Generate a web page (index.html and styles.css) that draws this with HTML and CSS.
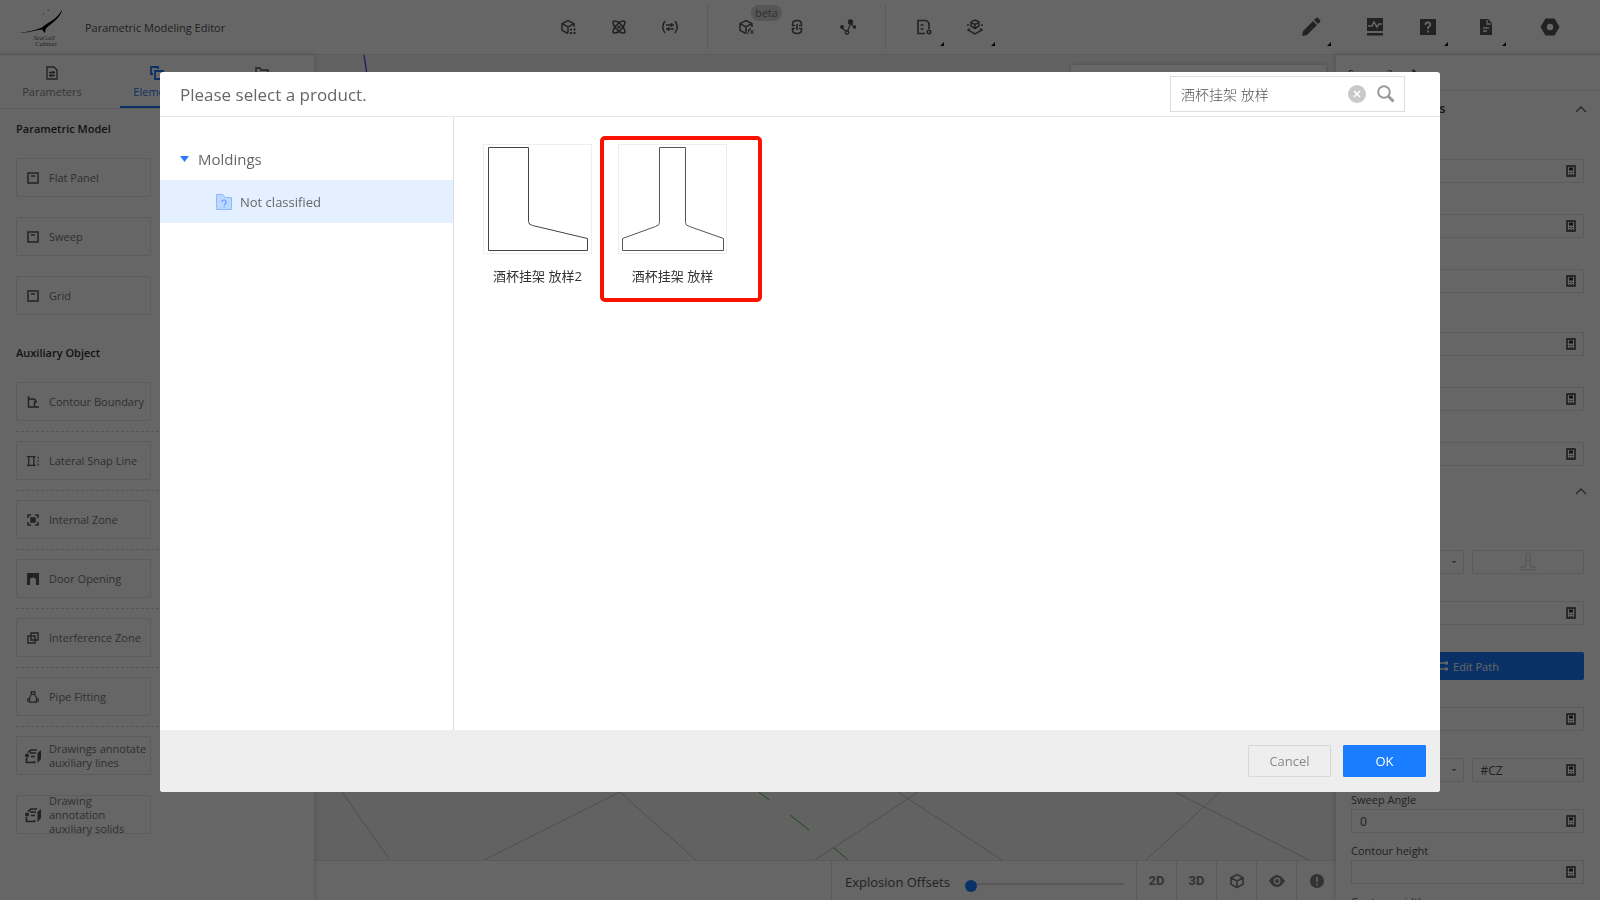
FILE: index.html
```html
<!DOCTYPE html>
<html lang="en">
<head>
<meta charset="utf-8">
<title>Parametric Modeling Editor</title>
<link rel="stylesheet" href="styles.css">
</head>
<body>
<svg class="defs" aria-hidden="true">
  <symbol id="panel" viewBox="0 0 12 12"><path d="M1 1h10v10H1z" fill="none" stroke="currentColor" stroke-width="1.5"/><path d="M4 4h4" stroke="currentColor" stroke-width="1.5"/></symbol>
  <symbol id="solid" viewBox="0 0 16 16"><path d="M3 4.500L6 2h6M5 5h6M1.500 10v4.500h8V13M6 8.500h4" fill="none" stroke="currentColor" stroke-width="1.700"/><path d="M12.500 5L16 2v9l-3.500 4z" fill="currentColor"/><circle cx="2" cy="7.500" r="2" fill="currentColor"/></symbol>
  <symbol id="calc" viewBox="0 0 10 12"><path d="M1 1h8v10H1z" fill="none" stroke="currentColor" stroke-width="1.4"/><path d="M3 2.500h4v3H3z" fill="currentColor"/><path d="M3 7.500h4M3 9.500h4" stroke="currentColor" stroke-width=".8" stroke-dasharray="1.500 1"/></symbol>
  <symbol id="up" viewBox="0 0 12 8"><path d="M1 7l5-5 5 5" fill="none" stroke="currentColor" stroke-width="1.4"/></symbol>
  <symbol id="cube" viewBox="0 0 16 16"><path d="M8 1.500l6 3.200v6.600l-6 3.200-6-3.200V4.700zM2 4.700L8 8l6-3.300M8 8v6.500" fill="none" stroke="currentColor" stroke-width="1.7"/></symbol>
</svg>
<div class="app">
  <header class="topbar">
    <svg class="logo" viewBox="0 0 48 38" aria-label="SeaGull Cabinet"><path d="M0 24c8 0 15-2 23-5 6-6 16-8 21-19-1 8-9 13-17 20l-1 5-3-4C15 22 8 25 0 24z" fill="#000"/><path d="M24 5h1M29 1h1" stroke="#555"/><text x="14" y="32" class="logo-text">SeaGull</text><text x="16" y="38" class="logo-text">Cabinet</text></svg>
    <h1 class="app-title">Parametric Modeling Editor</h1>
    <nav class="tools" aria-label="Tools">
      <div class="tool-group">
        <button class="tool" aria-label="Model grid"><svg viewBox="0 0 16 16"><path d="M8 14.500l-6-3.200V4.700l6-3.200 6 3.200V8M2 4.700L8 8l6-3.300M8 8v6" fill="none" stroke="currentColor" stroke-width="1.500"/><path d="M10 9.500h2v2h-2zM13.500 9.500h2v2h-2zM10 13h2v2h-2zM13.500 13h2v2h-2z" fill="currentColor"/></svg></button>
        <button class="tool" aria-label="Relations"><svg viewBox="0 0 16 16" fill="none" stroke="currentColor" stroke-width="1.600"><path d="M8 3.500C5 1.500 2 1.500 2 3.500c0 1 1 3 2 4.500-1 1.500-2 3.500-2 4.500 0 2 3 2 6 0 3 2 6 2 6 0 0-1-1-3-2-4.500 1-1.500 2-3.500 2-4.500 0-2-3-2-6 0zM8 3.500L4 8l4 4.500L12 8z"/><circle cx="8" cy="8" r=".8"/></svg></button>
        <button class="tool" aria-label="Variables"><svg viewBox="0 0 16 16" fill="none" stroke="currentColor" stroke-width="1.500"><path d="M3 2C0 6 0 10 3 14M13 2c3 4 3 8 0 12M4 6h8M4 10h8M9.500 4v4M6.500 8v4"/></svg></button>
      </div>
      <div class="tool-group">
        <button class="tool" aria-label="Formula"><svg viewBox="0 0 16 16" fill="none" stroke="currentColor" stroke-width="1.500"><path d="M8 14.500l-6-3.200V4.700l6-3.200 6 3.200V8M2 4.700L8 8l6-3.300M8 8v6"/><path d="M9 15c2 0 1-6 4-6M10 11h3M12.500 11l3 4M15.500 11l-3 4" stroke-width="1"/></svg><span class="beta">beta</span></button>
        <button class="tool" aria-label="Link"><svg viewBox="0 0 16 16" fill="none" stroke="currentColor" stroke-width="1.600"><path d="M6 6.500H3.500V5q0-3.500 4.500-3.500T12.500 5v1.500H10M6 9.500H3.500V11q0 3.500 4.500 3.500t4.500-3.500V9.500H10M8 5v6"/></svg></button>
        <button class="tool" aria-label="Nodes"><svg viewBox="0 0 16 16"><path d="M2 9l5 4 4-9 3 5" fill="none" stroke="currentColor" stroke-width="1.200"/><g fill="currentColor"><circle cx="2" cy="8" r="2"/><circle cx="10.500" cy="3" r="2.700"/><circle cx="14.500" cy="8" r="1.700"/></g><circle cx="7" cy="13.500" r="1.700" fill="#fff" stroke="currentColor" stroke-width="1.400"/></svg></button>
      </div>
      <div class="tool-group">
        <button class="tool more" aria-label="Document settings"><svg viewBox="0 0 16 16" fill="none" stroke="currentColor" stroke-width="1.600"><path d="M9 14.500H2v-13h8.500L13 4v6M4.500 6h3M4.500 10h3"/><circle cx="13" cy="13" r="1.700"/></svg></button>
        <button class="tool more" aria-label="Layers"><svg viewBox="0 0 16 16" fill="none" stroke="currentColor" stroke-width="1.500"><path d="M8 1l4 2v4L8 9.500 4 7V3zM4 3.500L8 5.500l4-2M8 5.500v4M3 9.500l-2 1.500 7 4 7-4-2-1.500M0 6h2M14 6h2"/></svg></button>
      </div>
    </nav>
    <nav class="actions" aria-label="Actions">
      <button class="action more" aria-label="Edit"><svg viewBox="0 0 20 20" fill="currentColor"><path d="M1 19l1-5L12 4l4 4L6 18zM13 3l2-2q1-1 2 0l2 2q1 1 0 2l-2 2z"/></svg></button>
      <button class="action" aria-label="Monitor"><svg viewBox="0 0 20 20"><path d="M2 1h16v13H2zM2 16h16v2.500H2z" fill="currentColor"/><path d="M3 9h4l2-4 3 5 2-3h3" fill="none" stroke="#fff" stroke-width="1.500"/></svg></button>
      <button class="action more" aria-label="Help"><svg viewBox="0 0 20 20"><path d="M2 2h16v16H2z" fill="currentColor"/><path d="M7.500 8V6.500Q10 4 12 6.500q1 2-2 4V12M10 13.500v2" fill="none" stroke="#fff" stroke-width="1.800"/></svg></button>
      <button class="action more" aria-label="Documents"><svg viewBox="0 0 20 20"><path d="M4 2h8l4 4v12H4z" fill="currentColor"/><path d="M11 3v4h4M7 11h6M7 14h4" fill="none" stroke="#fff" stroke-width="1.300"/></svg></button>
      <button class="action" aria-label="Settings"><svg viewBox="0 0 20 20"><path d="M5.500 1.500h9L19.500 10l-5 8.500h-9L.5 10z" fill="currentColor"/><circle cx="10" cy="10" r="3.200" fill="#fff"/></svg></button>
    </nav>
  </header>
  <div class="workspace">
    <aside class="left">
      <div class="tabs">
        <button class="tab"><svg viewBox="0 0 14 14" fill="none" stroke="currentColor" stroke-width="1.400"><path d="M2 1h7l3 3v9H2zM4 6.500h6M4 9.500h6M8 5v3M6 8v3"/></svg>Parameters</button>
        <button class="tab active"><svg viewBox="0 0 14 14" fill="none" stroke="currentColor" stroke-width="1.800"><path d="M3 8H1V1h7v2M5 5h8v8H5z"/></svg>Elements</button>
        <button class="tab" aria-label="Files"><svg viewBox="0 0 14 14" fill="none" stroke="currentColor" stroke-width="1.400"><path d="M1 13V2h4l1 2h7v9z"/></svg></button>
      </div>
      <section class="catalog">
        <h2>Parametric Model</h2>
        <div class="models">
          <button class="card"><svg><use href="#panel"/></svg><span>Flat Panel</span></button>
          <button class="card"><svg><use href="#panel"/></svg><span>Sweep</span></button>
          <button class="card"><svg><use href="#panel"/></svg><span>Grid</span></button>
        </div>
        <h2>Auxiliary Object</h2>
        <ul class="objects">
          <li><button class="card"><svg viewBox="0 0 12 12" fill="none" stroke="currentColor" stroke-width="1.500"><path d="M1.500 0v11H12M1 3h5q3 0 3 3H7.500v5"/></svg><span>Contour Boundary</span></button></li>
          <li><button class="card"><svg viewBox="0 0 14 12" fill="none" stroke="currentColor" stroke-width="1.500"><path d="M2 0v12M8 0v12M0 1h10M0 11h10"/><path d="M13 1v11" stroke-dasharray="2 2"/></svg><span>Lateral Snap Line</span></button></li>
          <li><button class="card"><svg viewBox="0 0 12 12" fill="none" stroke="currentColor" stroke-width="1.500"><path d="M1 4V1h3M8 1h3v3M11 8v3H8M4 11H1V8"/><path d="M4 4h4v4H4z" fill="currentColor"/></svg><span>Internal Zone</span></button></li>
          <li><button class="card"><svg viewBox="0 0 12 12"><path d="M0 0h12v12H9V6q-3-3-6 0v6H0z" fill="currentColor"/></svg><span>Door Opening</span></button></li>
          <li><button class="card"><svg viewBox="0 0 12 12" fill="none" stroke="currentColor" stroke-width="1.400"><path d="M4 1h7v7H4zM1 4h7v7H1z"/></svg><span>Interference Zone</span></button></li>
          <li><button class="card"><svg viewBox="0 0 14 14" fill="none" stroke="currentColor" stroke-width="1.300"><path d="M4 1h6M5 1v3L3 8v5h8V8L9 4V1M5 4h4M3 9H1v3h2M11 9h2v3h-2"/></svg><span>Pipe Fitting</span></button></li>
          <li class="plain"><button class="card"><svg class="large"><use href="#solid"/></svg><span>Drawings annotate auxiliary lines</span></button></li>
          <li class="plain"><button class="card"><svg class="large"><use href="#solid"/></svg><span>Drawing annotation auxiliary solids</span></button></li>
        </ul>
      </section>
    </aside>
    <main class="stage">
      <div class="canvas">
        <svg class="scene" viewBox="0 0 1022 805" preserveAspectRatio="xMidYMax slice" fill="none">
          <path d="M50 0l3 20" stroke="#6a50ff" stroke-width="1.500"/>
          <path d="M28 737l48 68M170 805l136-68 76 68M501 805l103-68M584 737l104 68M832 805l74-68M861 737l134 68" stroke="#c4c4c4"/>
          <path d="M445 737l10 8M476 760l19 15M520 793l14 12" stroke="#44b03c"/>
        </svg>
        <div class="float-panel"></div>
      </div>
      <footer class="viewbar">
        <label class="offsets">Explosion Offsets<input type="range" min="0" max="100" value="0"></label>
        <button class="view">2D</button>
        <button class="view">3D</button>
        <button class="view" aria-label="Perspective"><svg><use href="#cube"/></svg></button>
        <button class="view" aria-label="Visibility"><svg viewBox="0 0 16 16"><path d="M0 8q8-12 16 0-8 12-16 0z" fill="currentColor"/><circle cx="8" cy="8" r="2.700" fill="currentColor" stroke="#fff" stroke-width="1.500"/></svg></button>
        <button class="view" aria-label="Warnings"><svg viewBox="0 0 16 16"><circle cx="8" cy="8" r="7" fill="currentColor"/><path d="M8 4v5M8 10.500v2" stroke="#fff" stroke-width="1.500"/></svg></button>
      </footer>
    </main>
    <aside class="right">
      <div class="object-name">Sweep_2<svg viewBox="0 0 12 12" fill="currentColor"><path d="M0 12l1-4 5-5 3 3-5 5zM7 2l2-2 3 3-2 2z"/></svg></div>
      <div class="section-head"><h2>Basic Properties</h2><svg><use href="#up"/></svg></div>
      <div class="basic">
        <div class="field"><input aria-label="Name"><svg><use href="#calc"/></svg></div>
        <div class="field"><input aria-label="Code"><svg><use href="#calc"/></svg></div>
        <div class="field"><input aria-label="Visible"><svg><use href="#calc"/></svg></div>
        <div class="field split"><input aria-label="X"><svg><use href="#calc"/></svg></div>
        <div class="field"><input aria-label="Y"><svg><use href="#calc"/></svg></div>
        <div class="field"><input aria-label="Z"><svg><use href="#calc"/></svg></div>
      </div>
      <div class="section-head second"><svg><use href="#up"/></svg></div>
      <div class="shape">
        <div class="pair">
          <select aria-label="Contour type"><option></option></select>
          <button class="contour" aria-label="Contour"><svg viewBox="0 0 18 18" fill="none" stroke="currentColor"><path d="M7 1h4v12l6 2v2H1v-2l6-2z"/></svg></button>
        </div>
        <div class="field"><input aria-label="Offset"><svg><use href="#calc"/></svg></div>
        <button class="edit-path"><svg viewBox="0 0 12 12" fill="none" stroke="currentColor" stroke-width="1.500"><path d="M3 3h6M3 9h6"/><path d="M1 3h2M9 3h3M1 9h2M9 9h3" stroke-width="3"/></svg>Edit Path</button>
        <div class="field"><input aria-label="Path"><svg><use href="#calc"/></svg></div>
        <div class="pair">
          <select aria-label="Material type"><option></option></select>
          <div class="field"><input aria-label="Material" value="#CZ"><svg><use href="#calc"/></svg></div>
        </div>
      </div>
      <div class="labelled"><label for="angle">Sweep Angle</label><div class="field"><input id="angle" value="0"><svg><use href="#calc"/></svg></div></div>
      <div class="labelled"><label for="height">Contour height</label><div class="field"><input id="height"><svg><use href="#calc"/></svg></div></div>
      <div class="labelled"><label for="width">Contour width</label><div class="field"><input id="width"><svg><use href="#calc"/></svg></div></div>
    </aside>
  </div>
</div>
<div class="backdrop">
  <div class="dialog" role="dialog" aria-labelledby="dialog-title">
    <header class="dialog-head">
      <h2 id="dialog-title">Please select a product.</h2>
      <div class="search">
        <input type="text" aria-label="Search products" value="酒杯挂架 放样">
        <button class="clear" aria-label="Clear"><svg viewBox="0 0 18 18"><circle cx="9" cy="9" r="9" fill="#c9c9c9"/><path d="M6 6l6 6M12 6l-6 6" stroke="#fff" stroke-width="1.600"/></svg></button>
        <button class="find" aria-label="Search"><svg viewBox="0 0 18 18" fill="none" stroke="#999"><circle cx="7" cy="7" r="5.800" stroke-width="2"/><path d="M11.500 11.500l5 5" stroke-width="3"/></svg></button>
      </div>
    </header>
    <div class="dialog-body">
      <nav class="tree" aria-label="Categories">
        <button class="branch"><svg viewBox="0 0 9 6"><path d="M0 0h9L4.500 6z" fill="#2b7cff"/></svg>Moldings</button>
        <a class="leaf" href="#"><svg viewBox="0 0 16 16"><path d="M.5 15.500V.5H7l2 3h6.500v12z" fill="#bcd8ff" stroke="#8dbbff"/><path d="M6 8q0-2 2-2t2 2-2 3M8 12.500v1" fill="none" stroke="#5b9bff" stroke-width="1.200"/></svg>Not classified</a>
      </nav>
      <div class="products">
        <button class="product"><svg viewBox="0 0 107 108" fill="none" stroke="#444"><path d="M4.500 2.500h40v74q0 3 4 4l55 13v12h-99z"/></svg><span>酒杯挂架 放样2</span></button>
        <button class="product marked"><svg viewBox="0 0 107 108" fill="none" stroke="#555"><path d="M40.500 2.500h26v75q0 3 4 4l34 12v12h-101v-12l33-12q4-1 4-4z"/></svg><span>酒杯挂架 放样</span></button>
      </div>
    </div>
    <footer class="dialog-foot">
      <button class="btn">Cancel</button>
      <button class="btn primary">OK</button>
    </footer>
  </div>
</div>
</body>
</html>
```

FILE: styles.css
```css
* { box-sizing: border-box; }
body { margin: 0; font-family: "Open Sans", "Noto Sans CJK SC", sans-serif; font-size: 11px; color: #555; }
button, input, select { font: inherit; color: inherit; margin: 0; }
button { padding: 0; border: 0; background: none; }
h1, h2 { margin: 0; font-weight: 400; }
svg { display: block; flex: none; }
.defs { position: absolute; width: 0; height: 0; }

.app { display: flex; flex-direction: column; height: 100vh; overflow: hidden; background: #fff; }
.topbar { display: flex; align-items: center; height: 55px; flex: none; border-bottom: 1px solid #e6e6e6; padding-left: 20px; }
.logo { width: 46px; height: 37px; }
.logo-text { font: italic 7px "Liberation Serif", serif; fill: #555; }
.app-title { margin-left: 19px; padding-top: 1px; font-size: 11px; width: 445px; }
.tools { display: flex; height: 44px; }
.tool-group { display: flex; padding: 0 12px; border-right: 1px solid #e0e0e0; }
.tool-group:last-child { border: 0; }
.tool { position: relative; display: grid; place-items: center; width: 51px; color: #555; }
.tool svg { width: 16px; height: 16px; }
.beta { position: absolute; left: 31px; top: 0; padding: 0 4px; border-radius: 8px; background: #d6d6d6; font-size: 11px; line-height: 16px; color: #777; }
.more::after { content: ""; position: absolute; right: calc(50% - 20px); bottom: 3px; border: 2px solid #111; border-top-color: transparent; border-left-color: transparent; }
.actions { display: flex; margin-left: auto; padding-right: 19px; height: 44px; }
.action { position: relative; display: grid; place-items: center; width: 62px; color: #555; }
.action:nth-child(1) { width: 72px; }
.action:nth-child(2) { width: 56px; }
.action:nth-child(3) { width: 50px; }
.action:nth-child(4) { width: 66px; }
.action svg { width: 20px; height: 20px; }

.workspace { display: flex; flex: 1; min-height: 0; }
.left { position: relative; width: 314px; flex: none; box-shadow: 0 0 6px rgba(0, 0, 0, .2); z-index: 1; background: #fff; }
.tabs { display: flex; height: 54px; border-bottom: 1px solid #e6e6e6; }
.tab { flex: 1; display: flex; flex-direction: column; align-items: center; gap: 4px; padding-top: 11px; line-height: 16px; color: #888; }
.tab svg { width: 14px; height: 14px; color: #555; }
.tab.active { color: #1a7cff; margin: 0 16px; border-bottom: 2px solid #1a7cff; }
.tab.active svg { color: #1a7cff; }
.tab:not(.active) { flex: 0 0 104px; }
.catalog { padding: 11px 0 0 16px; }
.catalog h2, .section-head h2 { line-height: 18px; font-weight: 600; color: #333; }
.catalog h2 { font-size: 11px; }
.section-head h2 { font-size: 12px; }
.models { display: grid; gap: 20px; padding: 20px 0 29px; }
.objects { list-style: none; margin: 0; padding: 20px 0 0; display: grid; gap: 9px; }
.objects li { padding-bottom: 10px; border-bottom: 1px dashed #d4d4d4; }
.objects .plain { border-color: transparent; }
.card { display: flex; align-items: center; width: 135px; height: 39px; border: 1px solid #e6e6e6; border-radius: 2px; padding-left: 10px; line-height: 14px; text-align: left; color: #777; }
.card svg { width: 12px; height: 12px; margin: 0 10px 0 0; color: #555; }
.card .large { width: 16px; height: 16px; margin: 0 8px 0 -2px; }

.stage { flex: 1; min-width: 0; display: flex; flex-direction: column; }
.canvas { position: relative; flex: 1; min-height: 0; background: #f4f4f4; overflow: hidden; }
.scene { width: 100%; height: 100%; }
.float-panel { position: absolute; top: 10px; right: 10px; width: 255px; height: 300px; background: #fff; box-shadow: 0 0 4px rgba(0, 0, 0, .25); }
.viewbar { display: flex; justify-content: flex-end; height: 40px; border-top: 1px solid #e4e4e4; background: #fff; }
.offsets { display: flex; align-items: center; gap: 15px; width: 305px; padding: 2px 12px 0 13px; border-left: 1px solid #e4e4e4; font-size: 13px; white-space: nowrap; }
.offsets input { appearance: none; flex: 1; min-width: 0; height: 12px; margin-top: 4px; background: linear-gradient(#ddd, #ddd) center / 100% 2px no-repeat; }
.offsets input::-webkit-slider-thumb { appearance: none; width: 12px; height: 12px; margin-top: 4px; border-radius: 50%; background: #1a7cff; }
.view { display: grid; place-items: center; width: 40px; border-left: 1px solid #e4e4e4; font: 700 13px Roboto, sans-serif; color: #808080; }
.view svg { width: 16px; height: 16px; }

.right { position: relative; z-index: 1; width: 264px; flex: none; overflow: hidden; background: #fff; box-shadow: 0 0 6px rgba(0, 0, 0, .2); }
.object-name { display: flex; gap: 13px; align-items: center; height: 36px; padding: 2px 0 0 12px; border-bottom: 1px solid #e6e6e6; }
.object-name svg { width: 10px; height: 10px; }
.section-head { display: flex; align-items: center; justify-content: space-between; height: 36px; padding: 0 13px 0 16px; }
.section-head svg { width: 12px; height: 8px; margin-left: auto; color: #666; }
.basic { display: grid; gap: 31px; padding: 32px 16px 0 15px; }
.split { margin-top: 8px; }
.field { display: flex; align-items: center; height: 24px; border: 1px solid #e4e4e4; padding: 0 7px 0 8px; }
.field input { flex: 1; min-width: 0; border: 0; padding: 0; background: none; font-size: 12px; }
.field svg { width: 10px; height: 12px; color: #333; }
.second { margin-top: 7px; }
.shape { display: grid; gap: 27px; padding: 41px 16px 0 15px; }
.pair { display: grid; grid-template-columns: repeat(2, minmax(0, 1fr)); gap: 8px; }
.pair select { height: 24px; appearance: none; border: 1px solid #e4e4e4; border-radius: 0; background: conic-gradient(from -45deg at 50% 100%, #888 90deg, transparent 0) right 6px center / 6px 3px no-repeat; }
.contour { display: grid; place-items: center; border: 1px solid #e4e4e4; color: #d0d0d0; }
.contour svg { width: 18px; height: 18px; }
.edit-path { display: flex; align-items: center; justify-content: center; gap: 5px; height: 28px; border-radius: 2px; background: #1a7cff; color: #fff; }
.edit-path svg { width: 12px; height: 12px; }
.labelled { padding: 8px 16px 0 15px; }
.labelled label { display: block; line-height: 19px; }

.backdrop { position: fixed; inset: 0; z-index: 10; padding: 72px 10vw 108px; background: rgba(0, 0, 0, .6); }
.dialog { display: flex; flex-direction: column; height: 100%; border-radius: 3px; overflow: hidden; background: #fff; }
.dialog-head { display: flex; align-items: center; justify-content: space-between; height: 45px; flex: none; padding: 0 35px 0 20px; border-bottom: 1px solid #e8e8e8; }
.dialog-head h2 { font-size: 17px; color: #666; }
.search { display: flex; align-items: center; width: 235px; height: 36px; border: 1px solid #ddd; padding: 0 9px 0 10px; }
.search input { flex: 1; min-width: 0; border: 0; padding: 0; font-size: 14px; font-weight: 300; color: #555; }
.clear svg { width: 18px; height: 18px; }
.find { margin-left: 11px; }
.find svg { width: 18px; height: 18px; }
.dialog-body { display: flex; flex: 1; min-height: 0; }
.tree { width: 294px; flex: none; padding-top: 20px; border-right: 1px solid #ddd; }
.branch { display: flex; align-items: center; gap: 9px; height: 43px; padding-left: 20px; font-size: 15px; color: #666; }
.branch svg { width: 9px; height: 6px; }
.leaf { display: flex; align-items: center; gap: 8px; height: 43px; padding-left: 56px; background: #e4f0ff; color: #666; font-size: 13px; text-decoration: none; }
.leaf svg { width: 16px; height: 16px; }
.products { display: flex; align-items: flex-start; gap: 26px; padding: 27px 29px; }
.product { position: relative; width: 109px; font-size: 13px; line-height: 20px; color: #333; }
.product svg { width: 109px; height: 110px; margin-bottom: 12px; border: 1px solid #eee; }
.marked::after { content: ""; position: absolute; inset: -8px -35px -16px -18px; border: 4px solid #fb1100; border-radius: 5px; }
.dialog-foot { display: flex; align-items: center; justify-content: flex-end; gap: 12px; height: 62px; padding: 0 14px; background: #eee; }
.btn { width: 83px; height: 32px; border: 1px solid #d8d8d8; border-radius: 1px; font-size: 13px; color: #888; }
.primary { border-color: #1a7cff; background: #1a7cff; color: #fff; }
```
